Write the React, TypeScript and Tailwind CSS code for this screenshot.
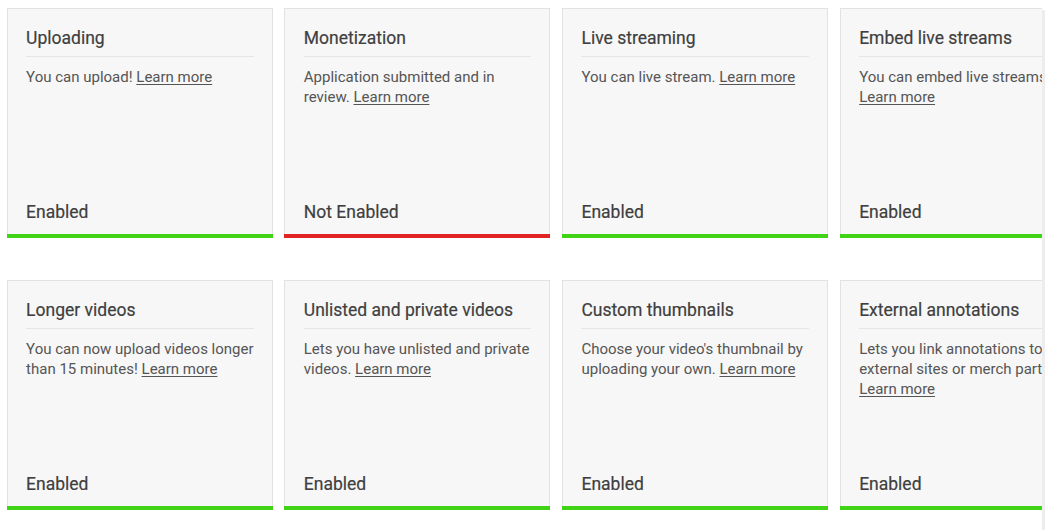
import React from "react";

type Card = { title: string; body: string; enabled: boolean };

const cards: Card[] = [
  { title: "Uploading", body: "You can upload!", enabled: true },
  { title: "Monetization", body: "Application submitted and in review.", enabled: false },
  { title: "Live streaming", body: "You can live stream.", enabled: true },
  { title: "Embed live streams", body: "You can embed live streams.", enabled: true },
  { title: "Longer videos", body: "You can now upload videos longer than 15 minutes!", enabled: true },
  { title: "Unlisted and private videos", body: "Lets you have unlisted and private videos.", enabled: true },
  { title: "Custom thumbnails", body: "Choose your video's thumbnail by uploading your own.", enabled: true },
  { title: "External annotations", body: "Lets you link annotations to external sites or merch partners.", enabled: true },
];

function FeatureCard({ c }: { c: Card }) {
  return (
    <div className="flex h-[230px] w-[266px] flex-col">
      <div className="flex flex-1 flex-col border-x border-t border-[#e2e2e2] bg-[#f7f7f7] pl-[18.5px] pr-[18px] pt-[17px]">
        <div className="border-b border-[#e6e6e6] pb-[6px] text-[17.5px] leading-[24px] text-[#3f3f3f] [-webkit-text-stroke:0.2px_#3f3f3f]">
          {c.title}
        </div>
        <p className="mt-[10px] text-[15px] leading-[20px] text-[#555]">
          {c.body}{" "}
          <a className="cursor-pointer underline decoration-1 underline-offset-2">Learn more</a>
        </p>
        <div className="mt-auto pb-[10px] text-[17.5px] leading-[24px] text-[#3f3f3f] [-webkit-text-stroke:0.2px_#3f3f3f]">
          {c.enabled ? "Enabled" : "Not Enabled"}
        </div>
      </div>
      <div className={c.enabled ? "h-[4px] bg-[#41d316]" : "h-[4px] bg-[#e02323]"} />
    </div>
  );
}

export default function App() {
  return (
    <div
      className="flex h-[530px] w-[1045px] bg-white"
      style={{ fontFamily: "Roboto, 'Liberation Sans', sans-serif" }}
    >
      <div className="w-[1042px] overflow-hidden">
        <div className="grid w-max grid-cols-[repeat(4,266px)] gap-x-[11.7px] gap-y-[42px] pl-[6.6px] pt-[8px]">
          {cards.map((c) => (
            <FeatureCard key={c.title} c={c} />
          ))}
        </div>
      </div>
      <div className="mt-[10px] w-[3px] bg-[#ededed]" />
    </div>
  );
}
